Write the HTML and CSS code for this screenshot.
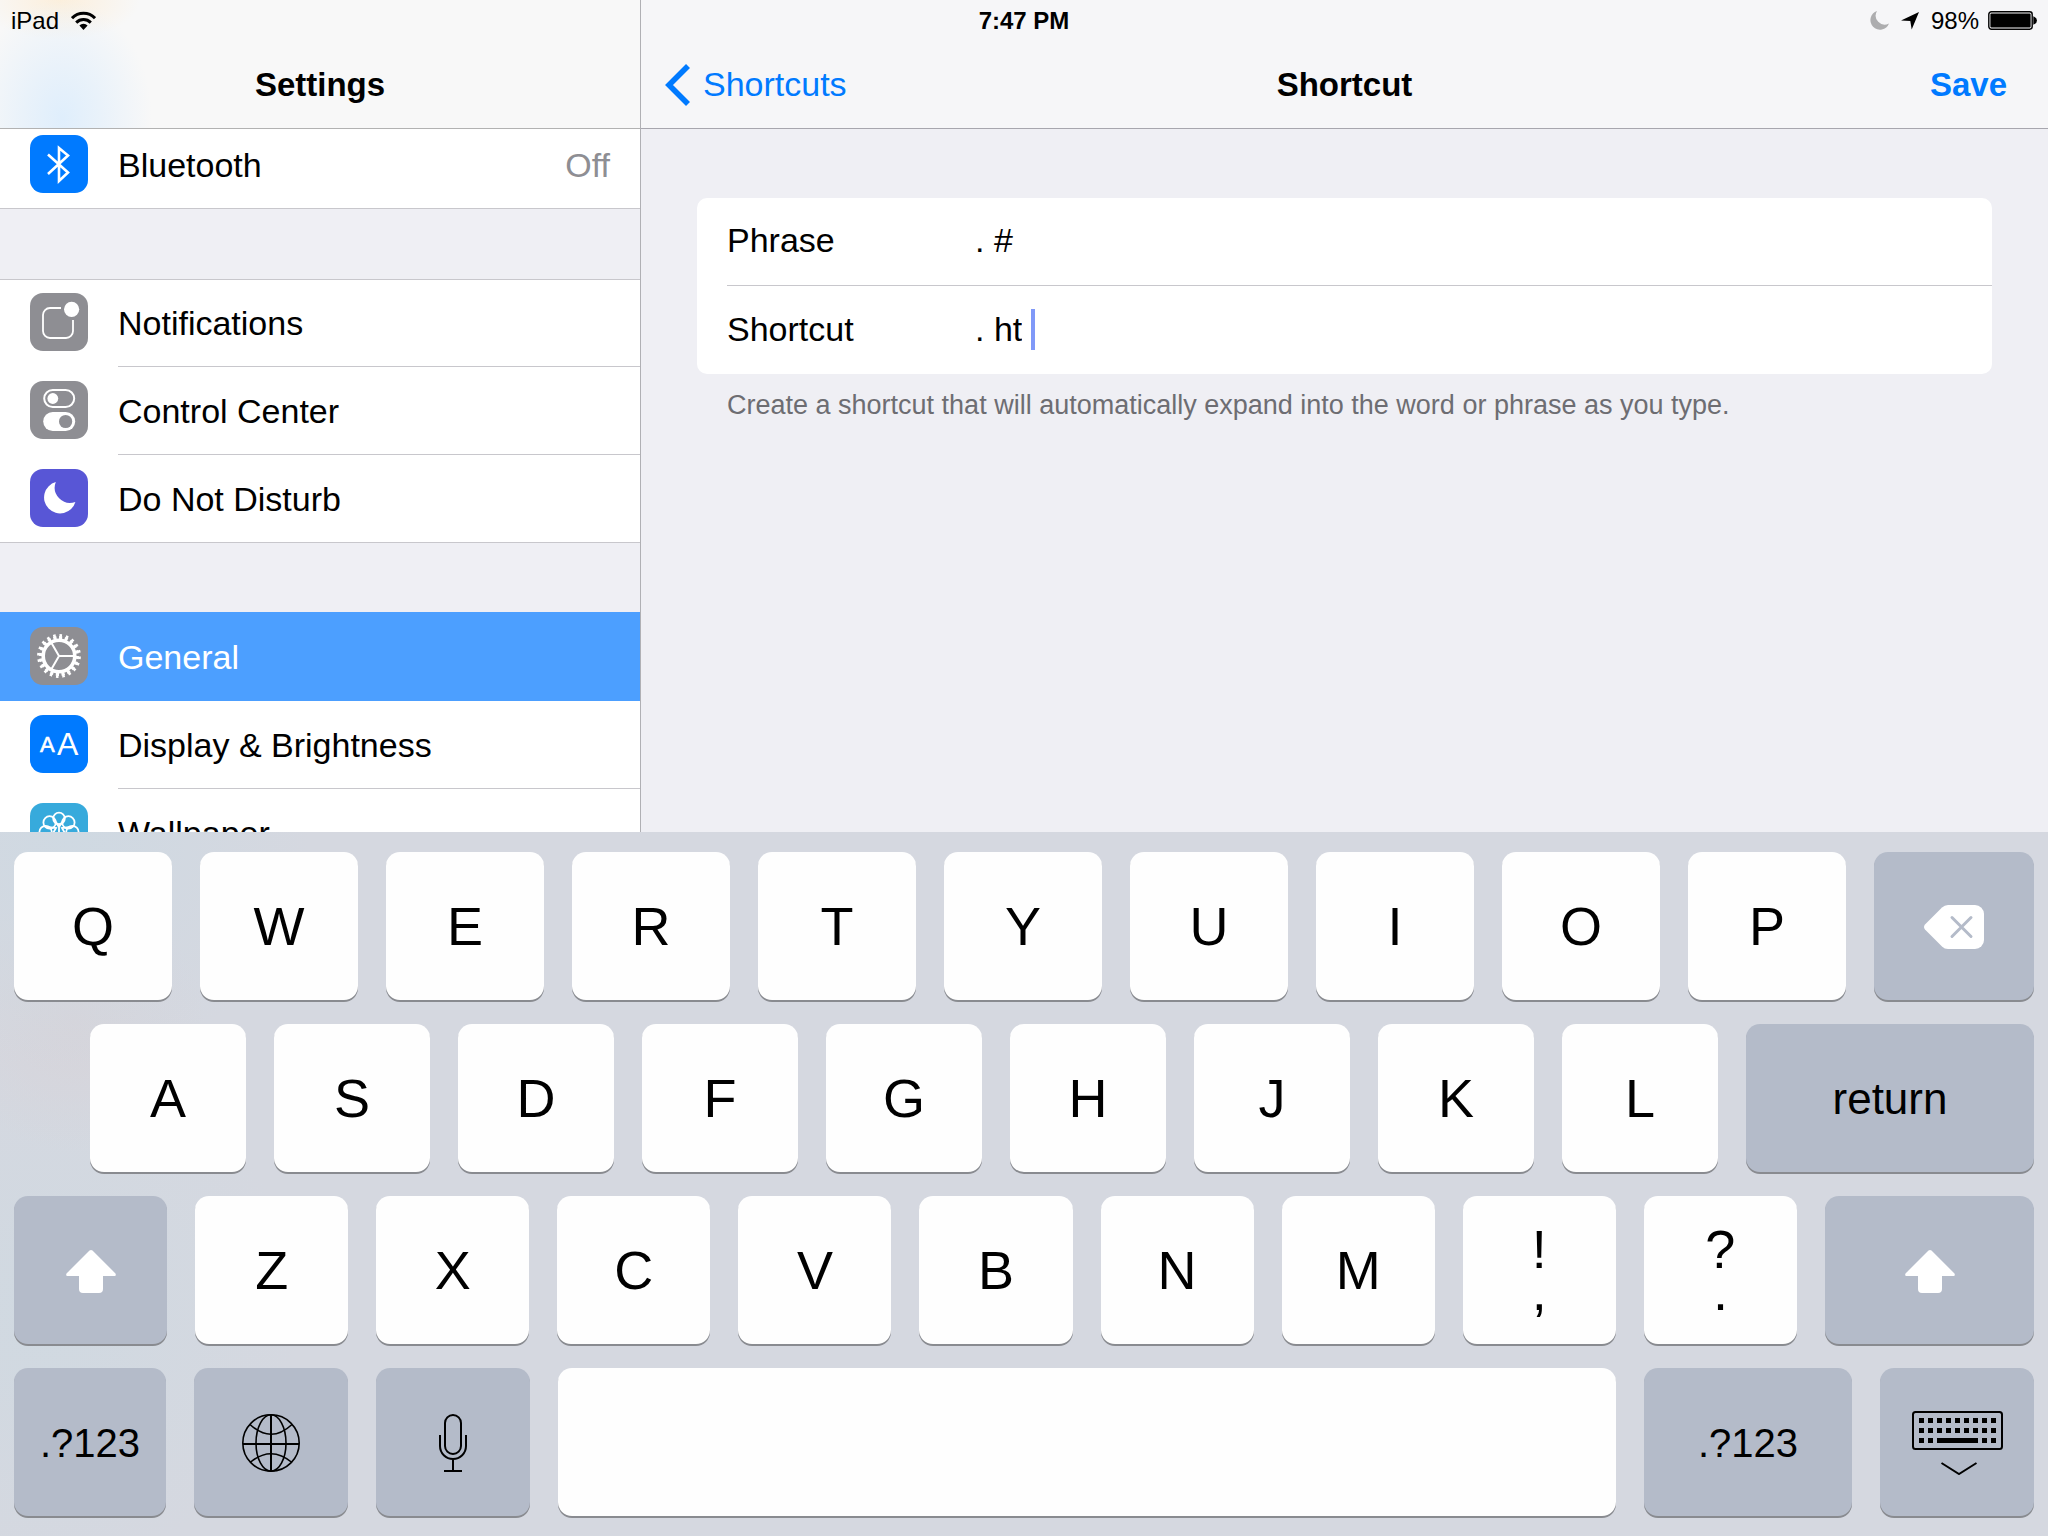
FILE: index.html
```
<!DOCTYPE html>
<html lang="en">
<head>
  <meta charset="UTF-8">
  <meta name="viewport" content="width=device-width, initial-scale=1.0">
  <title>Settings</title>
  <link rel="stylesheet" href="styles.css">
</head>
<body>
  <div class="status-bar">
    <div class="status-left">
      <span>iPad</span>
      <svg width="25" height="19" viewBox="0 0 25 19" fill="none" stroke="#000" stroke-width="3">
        <path d="M1 7.2A16 16 0 0 1 24 7.2"/>
        <path d="M5.2 11.6A10.4 10.4 0 0 1 19.8 11.6"/>
        <path d="M8.4 14.4A6 6 0 0 1 16.6 14.4L12.5 19z" fill="#000" stroke="none"/>
      </svg>
    </div>
    <div class="status-time">7:47 PM</div>
    <div class="status-right">
      <svg width="19" height="19" viewBox="0 0 19 19"><path d="M7 0A9.6 9.6 0 1 0 19 12.5A9 9 0 0 1 7 0z" fill="#adadaf"/></svg>
      <svg width="18" height="19" viewBox="0 0 18 19"><path d="M18 1L10.7 18.5L9.3 10L0 9.6z"/></svg>
      <span class="battery">98%
        <svg width="49" height="19" viewBox="0 0 49 19">
          <rect x="0.8" y="0.8" width="43.4" height="17.4" rx="2.6" fill="none" stroke="#000" stroke-width="1.4"/>
          <rect x="2.4" y="2.4" width="40.2" height="14.2" rx="1"/>
          <path d="M46 6.3a3.4 3.4 0 0 1 0 6.4z" stroke="#000" stroke-width="1.4"/>
        </svg>
      </span>
    </div>
  </div>

  <div class="panes">
    <nav class="sidebar">
      <header class="bar bar-sidebar">
        <h1>Settings</h1>
      </header>
      <div class="menu">
        <div class="group">
          <a class="row" href="#">
            <svg class="icon" viewBox="0 0 58 58">
              <rect width="58" height="58" rx="13" fill="#007aff"/>
              <path d="M18 19.5L38 37.5L29 46V13L38 20.5L18 39" fill="none" stroke="#fff" stroke-width="2.6"/>
            </svg>
            <span class="row-body">Bluetooth <span class="row-value">Off</span></span>
          </a>
        </div>

        <div class="group">
          <a class="row" href="#">
            <svg class="icon" viewBox="0 0 58 58">
              <rect width="58" height="58" rx="13" fill="#8e8e93"/>
              <path d="M31 15H20a7 7 0 0 0-7 7V38a7 7 0 0 0 7 7H36a7 7 0 0 0 7-7V27" fill="none" stroke="#fff" stroke-width="1.8"/>
              <circle cx="41.6" cy="16.3" r="7.6" fill="#fff"/>
            </svg>
            <span class="row-body">Notifications</span>
          </a>
          <a class="row" href="#">
            <svg class="icon" viewBox="0 0 58 58">
              <rect width="58" height="58" rx="13" fill="#8e8e93"/>
              <rect x="14.2" y="9" width="30" height="17" rx="8.5" fill="none" stroke="#fff" stroke-width="2"/>
              <circle cx="22.8" cy="17.5" r="5.4" fill="#fff"/>
              <rect x="13.2" y="31" width="32" height="19" rx="9.5" fill="#fff"/>
              <circle cx="35.6" cy="40.5" r="6.6" fill="#8e8e93"/>
            </svg>
            <span class="row-body">Control Center</span>
          </a>
          <a class="row" href="#">
            <svg class="icon" viewBox="0 0 58 58">
              <rect width="58" height="58" rx="13" fill="#5856d6"/>
              <path d="M25.8 13A16 16 0 1 0 45.4 33A15.4 15.4 0 0 1 25.8 13z" fill="#fff"/>
            </svg>
            <span class="row-body">Do Not Disturb</span>
          </a>
        </div>

        <div class="group">
          <a class="row selected" href="#">
            <svg class="icon" viewBox="0 0 58 58" fill="none" stroke="#fff">
              <rect width="58" height="58" rx="13" fill="#8e8e93" stroke="none"/>
              <circle cx="29" cy="29" r="15.8" stroke-width="3.6"/>
              <circle cx="29" cy="29" r="18.4" stroke-width="3" pathLength="200" stroke-dasharray="5.6 4.4"/>
              <circle cx="29" cy="29" r="20.4" stroke-width="3" pathLength="200" stroke-dasharray="4 6" stroke-dashoffset="-.8"/>
              <path d="M29 29H43.5M29 29L21.5 16M29 29L21.5 42" stroke-width="2"/>
            </svg>
            <span class="row-body">General</span>
          </a>
          <a class="row" href="#">
            <svg class="icon" viewBox="0 0 58 58">
              <rect width="58" height="58" rx="13" fill="#007aff"/>
              <text x="10" y="37" font-size="22" fill="#fff" stroke="#fff" stroke-width="0.6">A</text>
              <text x="27" y="40" font-size="32" fill="#fff">A</text>
            </svg>
            <span class="row-body">Display &amp; Brightness</span>
          </a>
          <a class="row" href="#">
            <svg class="icon" viewBox="0 0 58 58" fill="none" stroke="#fff" stroke-width="1.8">
              <rect width="58" height="58" rx="13" fill="#37aadc" stroke="none"/>
              <circle cx="29" cy="15.4" r="5.8"/>
              <circle cx="19.6" cy="19.4" r="6.2"/>
              <circle cx="38.4" cy="19.4" r="6.2"/>
              <circle cx="15.6" cy="29" r="6.2"/>
              <circle cx="42.4" cy="29" r="6.2"/>
              <circle cx="19.6" cy="38.6" r="6.2"/>
              <circle cx="38.4" cy="38.6" r="6.2"/>
              <circle cx="29" cy="42.6" r="5.8"/>
              <path d="M24.5 17L29 24L33.5 17M29 24V34M17 24L26 25L22 32M41 24L32 25L36 32"/>
            </svg>
            <span class="row-body">Wallpaper</span>
          </a>
        </div>
      </div>
    </nav>

    <main class="detail">
      <header class="bar bar-detail">
        <a class="back" href="#">
          <svg width="26" height="42" viewBox="0 0 26 42" fill="none" stroke="#007aff" stroke-width="5.6"><path d="M23 2L4 21L23 40"/></svg>
          Shortcuts
        </a>
        <h2>Shortcut</h2>
        <button class="save" type="button">Save</button>
      </header>
      <form class="form">
        <div class="card">
          <div class="field">
            <label for="phrase">Phrase</label>
            <input id="phrase" type="text" value=". #">
          </div>
          <div class="field">
            <label for="shortcut">Shortcut</label>
            <input id="shortcut" class="editing" type="text" value=". ht">
            <span class="caret"></span>
          </div>
        </div>
        <p class="hint">Create a shortcut that will automatically expand into the word or phrase as you type.</p>
      </form>
    </main>
  </div>

  <div class="keyboard">
    <div class="keys keys-top">
      <button class="key">Q</button>
      <button class="key">W</button>
      <button class="key">E</button>
      <button class="key">R</button>
      <button class="key">T</button>
      <button class="key">Y</button>
      <button class="key">U</button>
      <button class="key">I</button>
      <button class="key">O</button>
      <button class="key">P</button>
      <button class="key dark delete" aria-label="Delete">
        <svg width="60" height="44" viewBox="0 0 60 44">
          <path d="M18 2.5Q20.5 0 24 0H51a9 9 0 0 1 9 9V35a9 9 0 0 1-9 9H24Q20.5 44 18 41.5L1 24.5Q-1 22 1 19.5z" fill="#fff"/>
          <path d="M28 12.5L47 31.5M47 12.5L28 31.5" stroke="#b4bbc9" stroke-width="3" stroke-linecap="round"/>
        </svg>
      </button>
    </div>
    <div class="keys keys-home">
      <button class="key">A</button>
      <button class="key">S</button>
      <button class="key">D</button>
      <button class="key">F</button>
      <button class="key">G</button>
      <button class="key">H</button>
      <button class="key">J</button>
      <button class="key">K</button>
      <button class="key">L</button>
      <button class="key dark return">return</button>
    </div>
    <div class="keys keys-bottom">
      <button class="key dark" aria-label="Shift">
        <svg width="50" height="43" viewBox="0 0 50 43"><path d="M23.5 .6Q25-.6 26.5 .6L49.5 23.5Q50.5 26 48.5 26H37V39a4 4 0 0 1-4 4H17a4 4 0 0 1-4-4V26H1.5Q-.5 26 .5 23.5z" fill="#fff"/></svg>
      </button>
      <button class="key">Z</button>
      <button class="key">X</button>
      <button class="key">C</button>
      <button class="key">V</button>
      <button class="key">B</button>
      <button class="key">N</button>
      <button class="key">M</button>
      <button class="key stacked"><span>!</span><span>,</span></button>
      <button class="key stacked"><span>?</span><span>.</span></button>
      <button class="key dark shift-right" aria-label="Shift">
        <svg width="50" height="43" viewBox="0 0 50 43"><path d="M23.5 .6Q25-.6 26.5 .6L49.5 23.5Q50.5 26 48.5 26H37V39a4 4 0 0 1-4 4H17a4 4 0 0 1-4-4V26H1.5Q-.5 26 .5 23.5z" fill="#fff"/></svg>
      </button>
    </div>
    <div class="keys keys-space">
      <button class="key dark numbers">.?123</button>
      <button class="key dark" aria-label="Next keyboard">
        <svg width="58" height="58" viewBox="0 0 58 58" fill="none" stroke="#000" stroke-width="1.6">
          <circle cx="29" cy="29" r="28.2"/>
          <ellipse cx="29" cy="29" rx="15" ry="28.2"/>
          <path d="M8 10.5Q29 30 50 10.5M8 48.5Q29 31 50 48.5"/>
          <path d="M29 1V57M1 30H57" stroke-width="2"/>
        </svg>
      </button>
      <button class="key dark" aria-label="Dictate">
        <svg width="28" height="58" viewBox="0 0 28 58" fill="none" stroke="#000" stroke-width="2">
          <rect x="6" y="1" width="16" height="39" rx="8"/>
          <path d="M1 21V32a13 13 0 0 0 26 0V21M14 45V57M5 57H23"/>
        </svg>
      </button>
      <button class="key space" aria-label="Space"></button>
      <button class="key dark numbers-right">.?123</button>
      <button class="key dark" aria-label="Hide keyboard">
        <svg width="91" height="64" viewBox="0 0 91 64" fill="none" stroke="#000" stroke-width="2">
          <rect x="1" y="1" width="89" height="37" rx="2.5"/>
          <path d="M7 9.5H84M7 19.5H84" stroke-width="5" stroke-dasharray="5 4"/>
          <path d="M7 29.5h5m4 0h5m4 0h41m4 0h5m4 0h5" stroke-width="5"/>
          <path d="M29.5 52L47 63L64.5 52"/>
        </svg>
      </button>
    </div>
  </div>
</body>
</html>
```

FILE: styles.css
```
* {
  margin: 0;
  padding: 0;
  box-sizing: border-box;
}

body {
  background-color: #efeff4;
  color: #000;
  font-family: 'Liberation Sans', Arial, sans-serif;
  font-size: 34px;
  height: 100vh;
  display: flex;
  flex-direction: column;
  overflow: hidden;
  position: relative;
}

a {
  color: inherit;
  text-decoration: none;
}

button,
input {
  font: inherit;
  color: inherit;
  border: none;
  background: none;
}

svg {
  flex: none;
}

/* Status bar, drawn over both headers */
.status-bar {
  position: absolute;
  top: 0;
  left: 0;
  right: 0;
  z-index: 3;
  display: grid;
  grid-template-columns: 1fr auto 1fr;
  align-items: center;
  height: 41px;
  padding: 0 11px;
  font-size: 24px;
}

.status-left {
  display: flex;
  align-items: center;
  gap: 12px;
}

.status-time {
  font-weight: bold;
}

.status-right {
  display: flex;
  align-items: center;
  justify-content: flex-end;
  gap: 12px;
}

.battery {
  display: flex;
  align-items: center;
  gap: 9px;
}

/* Panes */
.panes {
  flex: 1;
  min-height: 0;
  display: flex;
}

.sidebar {
  width: 641px;
  border-right: 1px solid #b0b0b4;
  display: flex;
  flex-direction: column;
  overflow: hidden;
}

.bar {
  flex: none;
  position: relative;
  z-index: 2;
  height: 129px;
  padding-top: 41px;
  align-items: center;
}

.bar h1,
.bar h2 {
  font-size: 33px;
  font-weight: bold;
  text-align: center;
}

.bar-sidebar {
  display: flex;
  justify-content: center;
  border-bottom: 1px solid #b2b2b2;
  background:
    radial-gradient(90px 120px at 62px 118px, #dfeefc 0, rgba(226, 239, 251, 0.7) 40%, rgba(240, 245, 249, 0) 100%),
    radial-gradient(80px 40px at 60px 0, #fcefdc 0, rgba(252, 239, 220, 0) 100%),
    #f8f8f8;
}

.bar-detail {
  display: grid;
  grid-template-columns: 1fr auto 1fr;
  padding-left: 41px;
  padding-right: 41px;
  border-bottom: 1px solid #a7a6ae;
  background-color: #f6f6f8;
}

.back {
  display: flex;
  align-items: center;
  gap: 12px;
  margin-left: -17px;
  color: #007aff;
}

.save {
  justify-self: end;
  font-size: 33px;
  font-weight: bold;
  color: #007aff;
  cursor: pointer;
}

/* Settings list, scrolled a little under its header */
.menu {
  display: flex;
  flex-direction: column;
  gap: 70px;
  margin-top: -8px;
}

.group {
  background-color: #fff;
  box-shadow: inset 0 1px #c8c7cc, inset 0 -1px #c8c7cc;
}

.row {
  display: flex;
  gap: 30px;
  height: 88px;
  padding-left: 30px;
}

.row.selected {
  background-color: #4c9fff;
  box-shadow: 0 -1px #4c9fff;
  color: #fff;
}

.icon {
  width: 58px;
  height: 58px;
  margin-top: 14px;
}

.row-body {
  flex: 1;
  display: flex;
  align-items: center;
  justify-content: space-between;
  padding-top: 2px;
  padding-right: 30px;
  border-bottom: 1px solid #c8c7cc;
}

.row.selected .row-body {
  border-color: transparent;
}

.row-value {
  color: #8e8e93;
}

/* Shortcut form */
.detail {
  flex: 1;
  display: flex;
  flex-direction: column;
}

.form {
  padding: 69px 56px 0;
}

.card {
  background-color: #fff;
  border-radius: 10px;
  padding-left: 30px;
}

.field {
  display: flex;
  align-items: center;
  height: 88px;
  padding-bottom: 2px;
}

.field:first-child {
  border-bottom: 1px solid #c8c7cc;
}

.field label {
  width: 248px;
}

.field input {
  flex: 1;
  min-width: 0;
  outline: none;
}

.field .editing {
  flex: none;
  field-sizing: content;
}

.caret {
  width: 4px;
  height: 41px;
  margin-left: 9px;
  background-color: #8099f8;
}

.hint {
  padding: 15px 30px;
  font-size: 27px;
  line-height: 32px;
  color: #6d6d72;
}

/* Keyboard */
.keyboard {
  flex: none;
  display: flex;
  flex-direction: column;
  gap: 24px;
  padding: 20px 14px;
  background:
    radial-gradient(circle at 70px 0, #cfd9e2 0, rgba(207, 217, 226, 0) 240px),
    radial-gradient(circle at 75px 190px, #d6d4da 0, rgba(214, 212, 218, 0) 130px),
    radial-gradient(circle at 40px 480px, #d0d9e1 0, rgba(208, 217, 225, 0) 260px),
    #d5d8e0;
}

.keys {
  display: flex;
  gap: 28px;
}

.key {
  flex: 153 1 0;
  min-width: 0;
  height: 148px;
  display: flex;
  align-items: center;
  justify-content: center;
  background-color: #fefefe;
  border-radius: 14px;
  box-shadow: 0 2px #898b90;
  font-size: 54px;
  cursor: pointer;
}

.key.dark {
  background-color: #b4bbc9;
  padding-top: 2px;
  font-size: 40px;
}

.keys-top .key {
  flex-grow: 158;
}

.keys-top .delete {
  flex-grow: 160;
}

.keys-home {
  padding-left: 76px;
}

.keys-home .key {
  flex-grow: 156;
}

.keys-home .return {
  flex-grow: 288;
  font-size: 44px;
}

.keys-bottom .shift-right {
  flex-grow: 209;
}

.key.stacked {
  flex-direction: column;
  line-height: 42px;
}

.keys-space .key {
  flex-grow: 154;
}

.keys-space .numbers {
  flex-grow: 152;
}

.keys-space .space {
  flex-grow: 1058;
}

.keys-space .numbers-right {
  flex-grow: 208;
}
```
